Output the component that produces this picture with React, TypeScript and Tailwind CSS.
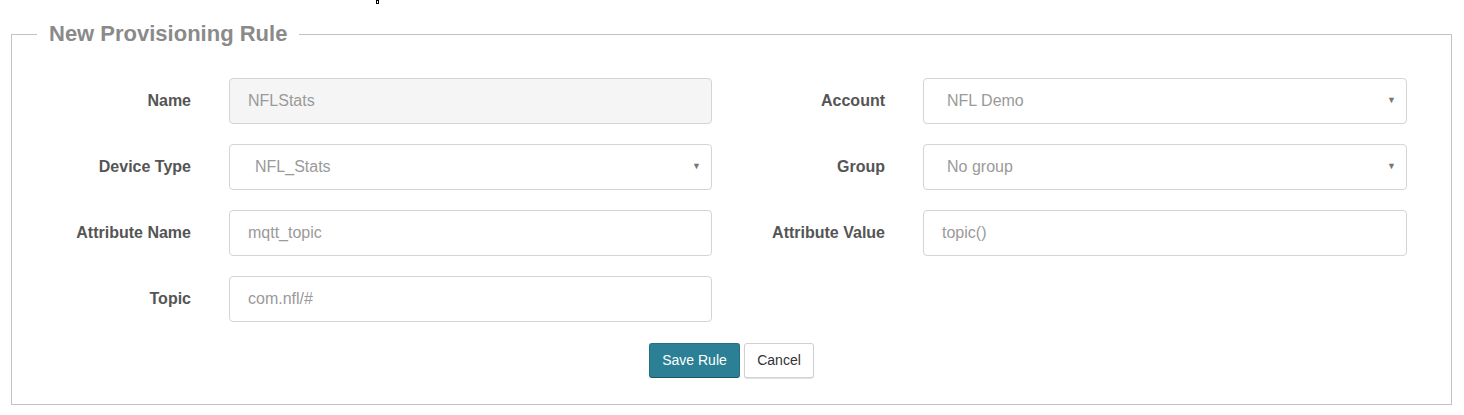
import React from 'react'

const font = { fontFamily: '"Liberation Sans", Arial, sans-serif' }

function Label({ text, width }: { text: string; width: string }) {
    return (
        <div
            className={`${width} shrink-0 text-right text-[16px] font-bold text-[#555]`}
        >
            {text}
        </div>
    )
}

function Field({
    value,
    width,
    disabled,
    select,
    pad,
}: {
    value: string
    width: string
    disabled?: boolean
    select?: boolean
    pad: string
}) {
    return (
        <div
            className={`${width} ml-[38px] h-[46px] shrink-0 flex items-center justify-between rounded-[4px] border border-[#d4d4d4] ${disabled ? 'bg-[#f5f5f5]' : 'bg-white'} ${pad} pr-[10px] text-[16px] text-[#9a9a9a]`}
        >
            <span>{value}</span>
            {select && <span className="text-[9px] text-[#777]">▼</span>}
        </div>
    )
}

export default function App() {
    return (
        <div className="relative w-[1464px] h-[415px] bg-white pt-[20px]" style={font}>
            {/* stray mark at top */}
            <div className="absolute left-[376px] top-0 w-[3px] h-[4px] border border-black" />
            <fieldset className="ml-[11px] w-[1441px] border border-[#c2c2c2] pb-[26px]">
                <legend className="ml-[25px] px-3 text-[22px] leading-[28px] font-bold text-[#8a8a8a]">
                    New Provisioning Rule
                </legend>
                <div className="flex flex-col gap-[20px] pt-[30px]">
                    <div className="flex items-center">
                        <Label text="Name" width="w-[179px]" />
                        <Field value="NFLStats" width="w-[483px]" disabled pad="pl-[18px]" />
                        <Label text="Account" width="w-[173px]" />
                        <Field value="NFL Demo" width="w-[484px]" select pad="pl-[23px]" />
                    </div>
                    <div className="flex items-center">
                        <Label text="Device Type" width="w-[179px]" />
                        <Field value="NFL_Stats" width="w-[483px]" select pad="pl-[25px]" />
                        <Label text="Group" width="w-[173px]" />
                        <Field value="No group" width="w-[484px]" select pad="pl-[23px]" />
                    </div>
                    <div className="flex items-center">
                        <Label text="Attribute Name" width="w-[179px]" />
                        <Field value="mqtt_topic" width="w-[483px]" pad="pl-[18px]" />
                        <Label text="Attribute Value" width="w-[173px]" />
                        <Field value="topic()" width="w-[484px]" pad="pl-[18px]" />
                    </div>
                    <div className="flex items-center">
                        <Label text="Topic" width="w-[179px]" />
                        <Field value="com.nfl/#" width="w-[483px]" pad="pl-[18px]" />
                    </div>
                </div>
                <div className="mt-[21px] flex justify-center gap-[4px]">
                    <button className="h-[35px] w-[91px] rounded-[3px] border border-[#256f82] border-b-[#1b5867] bg-[#2b8096] text-[14px] text-white">
                        Save Rule
                    </button>
                    <button className="h-[35px] w-[70px] rounded-[3px] border border-[#d0d0d0] bg-white text-[14px] text-[#333] shadow-[0_1px_1px_rgba(0,0,0,0.12)]">
                        Cancel
                    </button>
                </div>
            </fieldset>
        </div>
    )
}
